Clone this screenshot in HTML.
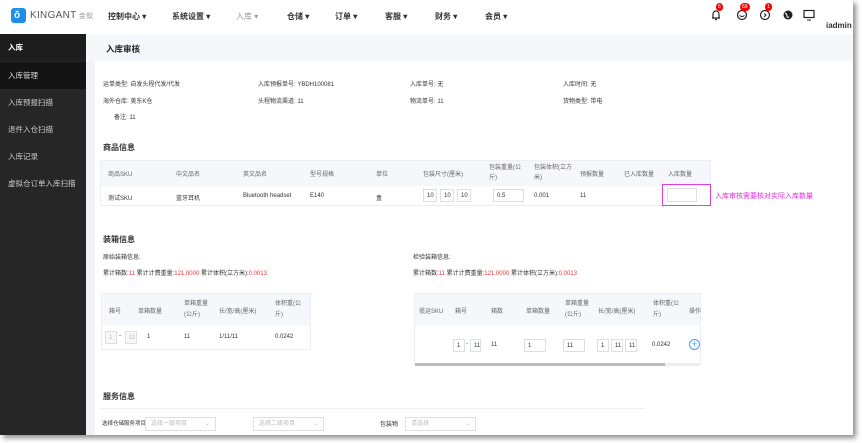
<!DOCTYPE html>
<html><head><meta charset="utf-8"><style>
*{margin:0;padding:0;box-sizing:border-box}
body{width:862px;height:443px;overflow:hidden;background:#fff;font-family:"Liberation Sans","Noto Sans CJK SC",sans-serif;color:#333;position:relative}
#win{position:absolute;left:0;top:0;width:853px;height:435px;background:#fff;box-shadow:3px 3px 5px rgba(0,0,0,.45);overflow:hidden}
.a{position:absolute;white-space:nowrap}
.nav{font-size:8px;font-weight:bold;color:#333;top:11px}
.side{position:absolute;left:0;top:34px;width:86px;height:401px;background:#262626}
.si{position:absolute;left:0;width:86px;height:27px;line-height:27px;padding-left:8px;color:#ccc;font-size:7.5px}
.s6{font-size:6px;color:#333}
.th{background:#f5f7fa}
.box{position:absolute;border:1px solid #dcdfe6;background:#fff;font-size:6px;color:#333;padding-left:3px;line-height:12px;height:13px}
.badge{position:absolute;background:#f00;color:#fff;border-radius:5px;font-size:5px;line-height:8px;height:8px;padding:0 2px;top:5px}
.ic{position:absolute;top:9px}
</style></head><body>
<div id="win">
<div class="a" style="left:11px;top:8px;width:15px;height:15px;background:#1e8fe8;border-radius:3px"></div>
<div class="a" style="left:14px;top:10px;color:#fff;font-size:10px;font-weight:bold;line-height:11px">ŏ</div>
<div class="a" style="left:30px;top:10px;font-size:10px;color:#555;letter-spacing:.3px">KINGANT<span style="font-size:7px;color:#999"> 金蚁</span></div>
<div class="a nav" style="left:108px">控制中心 ▾</div>
<div class="a nav" style="left:172px">系统设置 ▾</div>
<div class="a nav" style="left:236px;color:#999;font-weight:normal">入库 ▾</div>
<div class="a nav" style="left:287px">仓储 ▾</div>
<div class="a nav" style="left:335px">订单 ▾</div>
<div class="a nav" style="left:385px">客服 ▾</div>
<div class="a nav" style="left:435px">财务 ▾</div>
<div class="a nav" style="left:485px">会员 ▾</div>
<svg class="ic" style="left:710px" width="12" height="12" viewBox="0 0 12 12"><path d="M3 9V5a3 3 0 016 0v4H2h8M5 10.5h2" fill="none" stroke="#222" stroke-width="1.2"/></svg>
<div class="badge" style="left:716px;top:3px">6</div>
<svg class="ic" style="left:736px" width="12" height="12" viewBox="0 0 12 12"><circle cx="6" cy="6" r="4.5" fill="none" stroke="#222" stroke-width="1.2"/><path d="M3.5 6.5q2.5 2 5 0" fill="none" stroke="#222"/></svg>
<div class="badge" style="left:740px;top:3px">69</div>
<svg class="ic" style="left:759px" width="12" height="12" viewBox="0 0 12 12"><circle cx="6" cy="6" r="4.5" fill="none" stroke="#222" stroke-width="1.2"/><path d="M5 4.5l2 1.5-2 2" fill="none" stroke="#222"/></svg>
<div class="badge" style="left:765px;top:3px">1</div>
<svg class="ic" style="left:782px" width="12" height="12" viewBox="0 0 12 12"><circle cx="6" cy="6" r="4.5" fill="#222"/><path d="M3 4q2 1 2 3t2 1" fill="none" stroke="#fff"/></svg>
<svg class="ic" style="left:803px" width="12" height="12" viewBox="0 0 12 12"><rect x="1" y="1.5" width="10" height="7" fill="none" stroke="#222" stroke-width="1.2"/><path d="M4 11h4" stroke="#222"/></svg>
<div class="a" style="left:826px;top:21px;font-size:8px;font-weight:bold">iadmin</div>

<div class="side">
<div class="si" style="top:0;background:#1d1d1d;color:#fff;font-weight:bold">入库</div>
<div class="si" style="top:28px;background:#141414;color:#ddd">入库管理</div>
<div class="si" style="top:55px">入库预报扫描</div>
<div class="si" style="top:82px">退件入仓扫描</div>
<div class="si" style="top:109px">入库记录</div>
<div class="si" style="top:136px">虚拟仓订单入库扫描</div>
</div>
<div class="a" style="left:86px;top:34px;width:767px;height:401px;background:#f0f2f5"></div>
<div class="a th" style="left:86px;top:34px;width:767px;height:27px;background:#f5f7fa"></div>
<div class="a" style="left:106px;top:43px;font-size:8.5px;font-weight:bold;color:#222">入库审核</div>
<div class="a" style="left:95px;top:61px;width:758px;height:374px;background:#fff"></div>

<div class="a s6" style="left:103px;top:79px">运单类型: 自发头程代发/代发</div>
<div class="a s6" style="left:258px;top:79px">入库预报单号: YBDH100081</div>
<div class="a s6" style="left:410px;top:79px">入库单号: 无</div>
<div class="a s6" style="left:563px;top:79px">入库时间: 无</div>
<div class="a s6" style="left:103px;top:96px">海外仓库: 美东K仓</div>
<div class="a s6" style="left:258px;top:96px">头程物流渠道: 11</div>
<div class="a s6" style="left:410px;top:96px">物流单号: 11</div>
<div class="a s6" style="left:563px;top:96px">货物类型: 带电</div>
<div class="a s6" style="left:114px;top:112px">备注: 11</div>

<div class="a" style="left:103px;top:142px;font-size:8px;font-weight:bold">商品信息</div>
<div class="a" style="left:100px;top:160px;width:611px;height:46px;border:1px solid #ebeef5"></div>
<div class="a th" style="left:101px;top:161px;width:609px;height:25px"></div>
<div class="a s6" style="top:169px;left:108px;color:#666">商品SKU</div>
<div class="a s6" style="top:169px;left:176px;color:#666">中文品名</div>
<div class="a s6" style="top:169px;left:243px;color:#666">英文品名</div>
<div class="a s6" style="top:169px;left:310px;color:#666">型号规格</div>
<div class="a s6" style="top:169px;left:376px;color:#666">单位</div>
<div class="a s6" style="top:169px;left:423px;color:#666">包装尺寸(厘米)</div>
<div class="a s6" style="top:163px;left:489px;color:#666;line-height:10px">包装重量(公<br>斤)</div>
<div class="a s6" style="top:163px;left:534px;color:#666;line-height:10px">包装体积(立方<br>米)</div>
<div class="a s6" style="top:169px;left:580px;color:#666">预报数量</div>
<div class="a s6" style="top:169px;left:624px;color:#666">已入库数量</div>
<div class="a s6" style="top:169px;left:668px;color:#666">入库数量</div>
<div class="a s6" style="top:193px;left:108px">测试SKU</div>
<div class="a s6" style="top:193px;left:176px">蓝牙耳机</div>
<div class="a s6" style="top:193px;left:243px">Bluetooth headset</div>
<div class="a s6" style="top:193px;left:310px">E140</div>
<div class="a s6" style="top:193px;left:376px">盒</div>
<div class="box" style="left:423px;top:189px;width:14px">10</div>
<div class="box" style="left:440px;top:189px;width:14px">10</div>
<div class="box" style="left:457px;top:189px;width:14px">10</div>
<div class="box" style="left:493px;top:189px;width:31px">0.5</div>
<div class="a s6" style="top:193px;left:534px">0.001</div>
<div class="a s6" style="top:193px;left:580px">11</div>
<div class="a" style="left:662px;top:184px;width:49px;height:22px;border:1.5px solid #e040e0"></div>
<div class="box" style="left:667px;top:188px;width:30px;height:14px"></div>
<div class="a" style="left:715px;top:191px;font-size:7px;color:#e030e0">入库审核需要核对实际入库数量</div>

<div class="a" style="left:103px;top:234px;font-size:8px;font-weight:bold">装箱信息</div>
<div class="a s6" style="left:103px;top:252px">原始装箱信息:</div>
<div class="a s6" style="left:413px;top:252px">检验装箱信息:</div>
<div class="a s6" style="left:103px;top:268px">累计箱数:<span style="color:#e33">11</span> 累计计费重量:<span style="color:#e33">121.0000</span> 累计体积(立方米):<span style="color:#e33">0.0013</span></div>
<div class="a s6" style="left:413px;top:268px">累计箱数:<span style="color:#e33">11</span> 累计计费重量:<span style="color:#e33">121.0000</span> 累计体积(立方米):<span style="color:#e33">0.0013</span></div>

<div class="a" style="left:101px;top:293px;width:210px;height:57px;border:1px solid #ebeef5"></div>
<div class="a th" style="left:102px;top:294px;width:208px;height:32px"></div>
<div class="a s6" style="top:306px;left:109px;color:#666">箱号</div>
<div class="a s6" style="top:306px;left:138px;color:#666">单箱数量</div>
<div class="a s6" style="top:299px;left:184px;color:#666;line-height:11px">单箱重量<br>(公斤)</div>
<div class="a s6" style="top:306px;left:219px;color:#666">长/宽/高(厘米)</div>
<div class="a s6" style="top:299px;left:275px;color:#666;line-height:11px">体积重(公<br>斤)</div>
<div class="box" style="left:105px;top:331px;width:12px;background:#f5f7fa;color:#bbb">1</div>
<div class="a s6" style="left:119px;top:333px">-</div>
<div class="box" style="left:125px;top:331px;width:12px;background:#f5f7fa;color:#bbb">11</div>
<div class="a s6" style="top:334px;left:147px">1</div>
<div class="a s6" style="top:334px;left:184px">11</div>
<div class="a s6" style="top:334px;left:219px">1/11/11</div>
<div class="a s6" style="top:334px;left:275px">0.0242</div>

<div class="a" style="left:414px;top:293px;width:287px;height:72px;border:1px solid #ebeef5"></div>
<div class="a th" style="left:415px;top:294px;width:285px;height:32px"></div>
<div class="a s6" style="top:306px;left:419px;color:#666">揽运SKU</div>
<div class="a s6" style="top:306px;left:455px;color:#666">箱号</div>
<div class="a s6" style="top:306px;left:491px;color:#666">箱数</div>
<div class="a s6" style="top:306px;left:526px;color:#666">单箱数量</div>
<div class="a s6" style="top:299px;left:565px;color:#666;line-height:11px">单箱重量<br>(公斤)</div>
<div class="a s6" style="top:306px;left:598px;color:#666">长/宽/高(厘米)</div>
<div class="a s6" style="top:299px;left:653px;color:#666;line-height:11px">体积重(公<br>斤)</div>
<div class="a s6" style="top:306px;left:689px;color:#666">操作</div>
<div class="box" style="left:453px;top:339px;width:12px">1</div>
<div class="a s6" style="left:466px;top:341px">-</div>
<div class="box" style="left:470px;top:339px;width:11px">11</div>
<div class="a s6" style="top:342px;left:491px">11</div>
<div class="box" style="left:524px;top:339px;width:22px">1</div>
<div class="box" style="left:563px;top:339px;width:22px">11</div>
<div class="box" style="left:597px;top:339px;width:12px">1</div>
<div class="box" style="left:611px;top:339px;width:12px">11</div>
<div class="box" style="left:625px;top:339px;width:12px">11</div>
<div class="a s6" style="top:342px;left:652px">0.0242</div>
<div class="a" style="left:689px;top:339px;width:11px;height:11px;border:1px solid #409eff;border-radius:50%;color:#409eff;font-size:9px;line-height:9px;text-align:center">+</div>
<div class="a" style="left:415px;top:363px;width:285px;height:3px;background:#eee"></div>
<div class="a" style="left:415px;top:363px;width:250px;height:3px;background:#bbb"></div>

<div class="a" style="left:103px;top:391px;font-size:8px;font-weight:bold">服务信息</div>
<div class="a" style="left:100px;top:408px;width:545px;height:1px;background:#eef0f3"></div>
<div class="a" style="left:102px;top:419px;font-size:5.5px;color:#333">选择仓储服务项目:</div>
<div class="box" style="left:145px;top:417px;width:71px;height:14px;color:#bbb;padding-left:5px">选择一级项目 <span style="float:right;margin-right:5px">⌄</span></div>
<div class="box" style="left:253px;top:417px;width:71px;height:14px;color:#bbb;padding-left:5px">选择二级项目 <span style="float:right;margin-right:5px">⌄</span></div>
<div class="a s6" style="left:380px;top:419px">包装物</div>
<div class="box" style="left:405px;top:417px;width:71px;height:14px;color:#bbb;padding-left:5px">请选择 <span style="float:right;margin-right:5px">⌄</span></div>
</div>
</body></html>
